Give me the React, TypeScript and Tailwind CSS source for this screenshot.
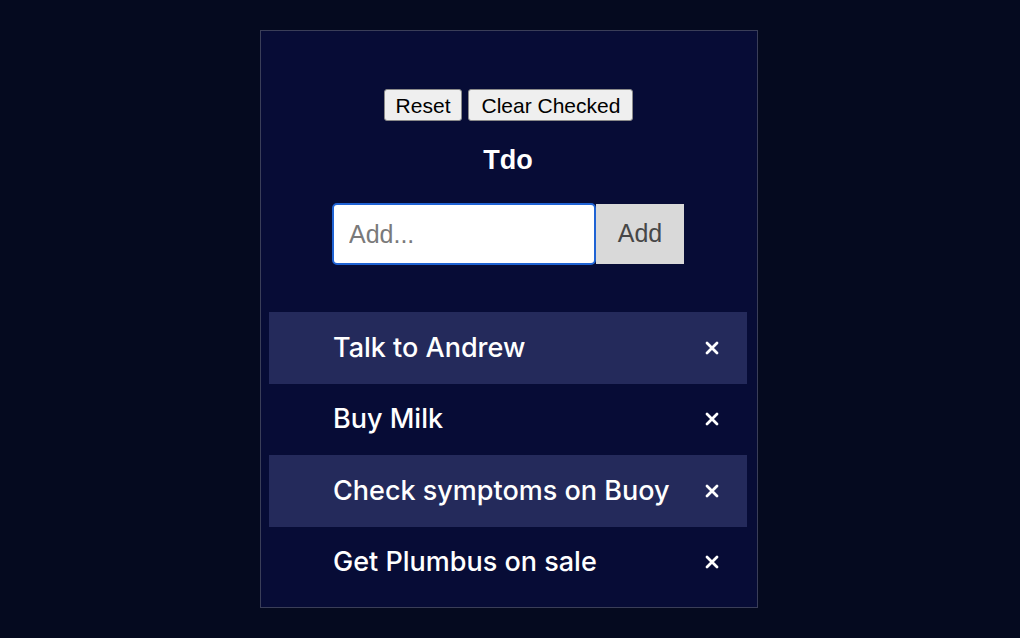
import { useState } from "react";

interface Todo {
  id: number;
  text: string;
}

const initialTodos: Todo[] = [
  { id: 1, text: "Talk to Andrew" },
  { id: 2, text: "Buy Milk" },
  { id: 3, text: "Check symptoms on Buoy" },
  { id: 4, text: "Get Plumbus on sale" },
];

const CloseIcon = () => (
  <svg width="14" height="14" viewBox="0 0 14 14" fill="none">
    <path d="M2 2L12 12M12 2L2 12" stroke="white" strokeWidth="2.8" strokeLinecap="round" />
  </svg>
);

const App = () => {
  const [todos, setTodos] = useState<Todo[]>(initialTodos);
  const [value, setValue] = useState("");

  const handleAdd = (e: React.FormEvent) => {
    e.preventDefault();
    if (!value.trim()) return;
    setTodos([...todos, { id: Date.now(), text: value.trim() }]);
    setValue("");
  };

  return (
    <div className="flex min-h-screen justify-center bg-[#050a1f] pr-[2px] pt-[30px] font-['Liberation_Sans',Arial,sans-serif]">
      <div className="h-[578px] w-[498px] border border-[#3a3e58] bg-[#070c36] pl-2 pr-[10px] pt-[58px]">
        <div className="flex justify-center gap-[6px] pl-[1px]">
          <button
            onClick={() => setTodos(initialTodos)}
            className="h-[32px] rounded-[3px] border border-[#8a8a8a] bg-[#efefef] px-[11px] text-[21px] leading-none text-black"
          >
            Reset
          </button>
          <button
            onClick={() => setTodos([])}
            className="h-[32px] rounded-[3px] border border-[#8a8a8a] bg-[#efefef] px-[12px] text-[21px] leading-none text-black"
          >
            Clear Checked
          </button>
        </div>

        <h1 className="mt-[23px] text-center text-[27px] font-bold leading-[32px] text-white">Tdo</h1>

        <form onSubmit={handleAdd} className="mt-[27px] flex justify-center">
          <input
            value={value}
            onChange={(e) => setValue(e.target.value)}
            placeholder="Add..."
            className="h-[62px] w-[264px] rounded-[5px] border-2 border-[#1f63d4] bg-white px-[15px] text-[25px] text-black outline-none placeholder:text-[#7a7a7a]"
          />
          <button
            type="submit"
            className="my-[1px] h-[60px] w-[88px] bg-[#d9d9d9] text-[25px] text-[#474747]"
          >
            Add
          </button>
        </form>

        <ul className="mt-[47px]">
          {todos.map((todo, i) => (
            <li
              key={todo.id}
              className={`flex h-[71.5px] items-center justify-between pl-[64px] pr-[28px] font-['Inter',sans-serif] text-[27px] font-medium text-white ${
                i % 2 === 0 ? "bg-[#242a5b]" : ""
              }`}
            >
              <span>{todo.text}</span>
              <button onClick={() => setTodos(todos.filter((t) => t.id !== todo.id))}>
                <CloseIcon />
              </button>
            </li>
          ))}
        </ul>
      </div>
    </div>
  );
};

export default App;
